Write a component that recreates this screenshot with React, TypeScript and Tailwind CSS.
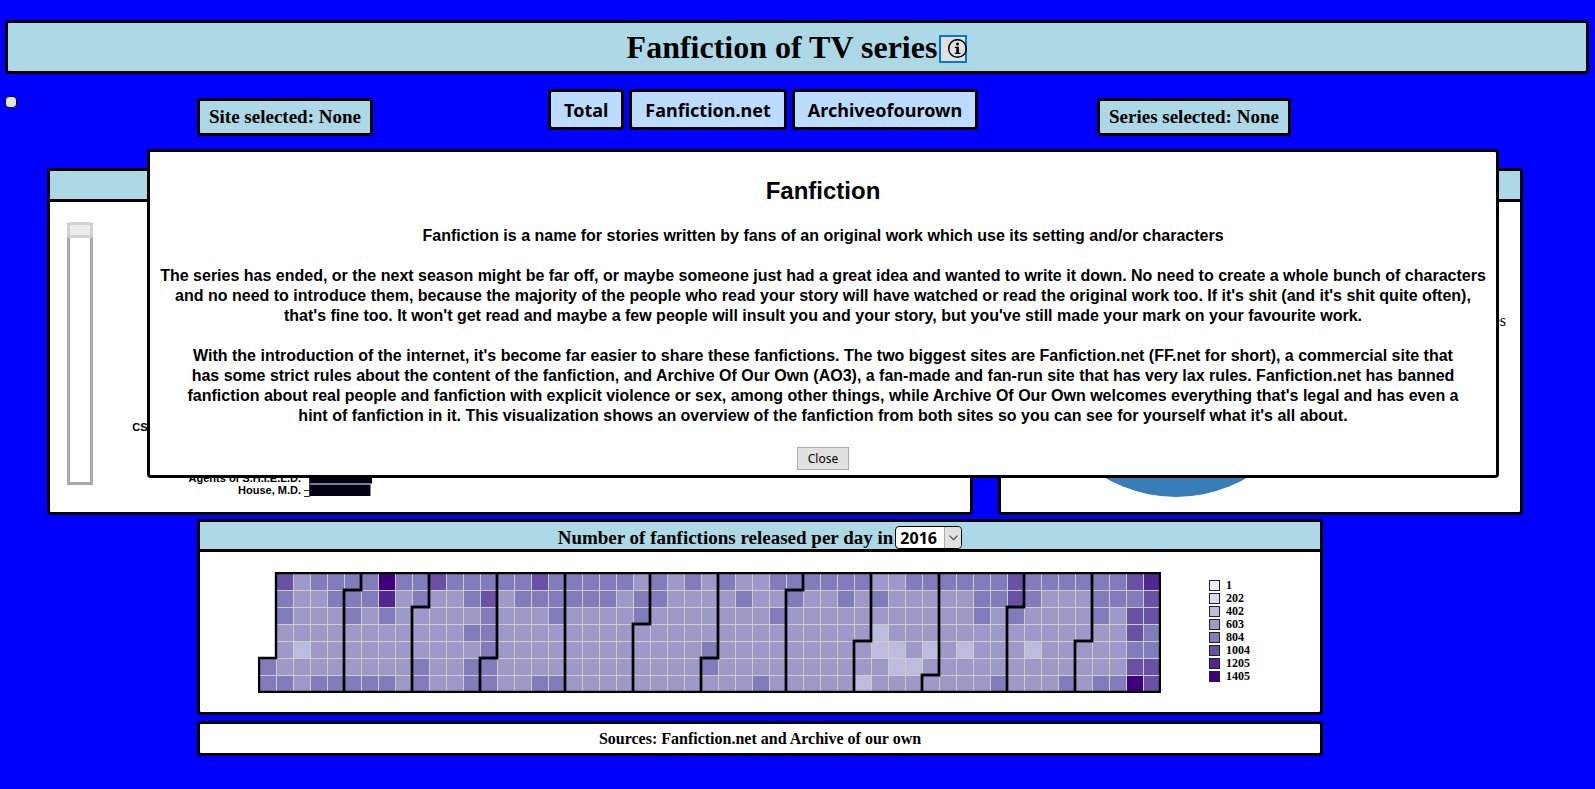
import React, { useState } from 'react'

const CELL = 17
const YEAR = 2016
const PURPLES = ['#efedf5', '#dadaeb', '#bcbddc', '#9e9ac8', '#807dba', '#6a51a3', '#54278f', '#3f007d']
const LEGEND = [1, 202, 402, 603, 804, 1004, 1205, 1405]
const BASE_LEVEL = 3

// Per weekday: weeks whose colour level differs from BASE_LEVEL, keyed by level.
const LEVELS: Record<number, number[]>[] = [
  {
    4: [3, 4, 5, 6, 8, 9, 11, 12, 13, 14, 15, 17, 18, 19, 20, 21, 23, 25, 27, 30, 31, 32, 33, 34, 35, 38, 39, 40, 41, 42, 43, 45, 46, 47, 48, 49, 50],
    5: [1, 10, 16, 44, 51],
    6: [52],
    7: [7],
  },
  {
    4: [1, 4, 5, 6, 9, 12, 15, 16, 17, 18, 19, 20, 22, 23, 28, 31, 34, 36, 42, 43, 45, 49, 50, 51],
    5: [13, 44, 52],
    6: [7],
  },
  { 4: [1, 5, 7, 13, 17, 22, 30, 42, 44, 49], 5: [51, 52] },
  { 2: [36], 4: [12, 13, 52], 5: [51] },
  { 2: [2, 36, 37, 39, 41, 45], 4: [13, 26, 51, 52] },
  { 2: [37, 38], 4: [0, 9, 12, 13, 26], 5: [51, 52] },
  { 2: [35], 4: [0, 1, 3, 4, 5, 6, 7, 9, 12, 13, 16, 17, 29, 43, 47, 49, 50], 5: [52], 7: [51] },
]

const levelOf = (day: number, week: number) => {
  const hit = Object.entries(LEVELS[day]).find(([, weeks]) => weeks.includes(week))
  return hit ? Number(hit[0]) : BASE_LEVEL
}

const position = (date: Date) => {
  const firstDay = new Date(YEAR, 0, 1).getDay()
  const dayOfYear = Math.round((date.getTime() - new Date(YEAR, 0, 1).getTime()) / 86400000)
  return { day: date.getDay(), week: Math.floor((dayOfYear + firstDay) / 7) }
}

const monthPath = (month: number) => {
  const a = position(new Date(YEAR, month, 1))
  const b = position(new Date(YEAR, month + 1, 0))
  return (
    `M${(a.week + 1) * CELL},${a.day * CELL}H${a.week * CELL}V${7 * CELL}` +
    `H${b.week * CELL}V${(b.day + 1) * CELL}H${(b.week + 1) * CELL}V0H${(a.week + 1) * CELL}Z`
  )
}

const FRAME = 'rounded border-[3px] border-black'

function Calendar() {
  const cells: React.ReactElement[] = []
  for (let week = 0; week < 53; week++) {
    for (let day = 0; day < 7; day++) {
      if (week === 0 && day < 5) continue
      cells.push(
        <rect
          key={`${week}-${day}`}
          x={week * CELL}
          y={day * CELL}
          width={CELL}
          height={CELL}
          fill={PURPLES[levelOf(day, week)]}
          stroke="#cccccc"
          shapeRendering="crispEdges"
        />,
      )
    }
  }
  return (
    <svg width="903" height="121" viewBox="-1 -1 903 121" className="shrink-0" role="img" aria-label="Fanfictions per day">
      {cells}
      {Array.from({ length: 12 }, (_, m) => (
        <path key={m} d={monthPath(m)} fill="none" stroke="#000" strokeWidth="2.4" />
      ))}
    </svg>
  )
}

function Info({ onClose }: { onClose: () => void }) {
  return (
    <div
      role="dialog"
      aria-labelledby="info-title"
      className={`${FRAME} absolute top-[149px] right-24 left-[147px] bg-white px-2 pt-[23px] pb-[5px] text-center font-['Liberation_Sans',sans-serif] text-base leading-5 font-bold`}
    >
      <h2 id="info-title" className="mb-[19px] text-2xl leading-8">Fanfiction</h2>
      <p className="mb-5">Fanfiction is a name for stories written by fans of an original work which use its setting and/or characters</p>
      <p className="mb-5">
        The series has ended, or the next season might be far off, or maybe someone just had a great idea and wanted to write it down. No need to create a whole bunch of characters
        <br />
        and no need to introduce them, because the majority of the people who read your story will have watched or read the original work too. If it's shit (and it's shit quite often),
        <br />
        that's fine too. It won't get read and maybe a few people will insult you and your story, but you've still made your mark on your favourite work.
      </p>
      <p className="mb-[21px]">
        With the introduction of the internet, it's become far easier to share these fanfictions. The two biggest sites are Fanfiction.net (FF.net for short), a commercial site that
        <br />
        has some strict rules about the content of the fanfiction, and Archive Of Our Own (AO3), a fan-made and fan-run site that has very lax rules. Fanfiction.net has banned
        <br />
        fanfiction about real people and fanfiction with explicit violence or sex, among other things, while Archive Of Our Own welcomes everything that's legal and has even a
        <br />
        hint of fanfiction in it. This visualization shows an overview of the fanfiction from both sites so you can see for yourself what it's all about.
      </p>
      <button
        type="button"
        onClick={onClose}
        className="mx-auto block h-[23px] border border-[#adadad] bg-[#e1e1e1] px-[10px] font-['Noto_Sans',sans-serif] text-xs font-normal"
      >
        Close
      </button>
    </div>
  )
}

export default function App() {
  const [open, setOpen] = useState(true)
  const siteButton = `${FRAME} h-[41px] bg-[#bbdcff] px-[13px] text-lg`
  const label = `${FRAME} mt-[9px] h-[38px] bg-[#add8e6] px-[9px] text-[19px] leading-8`

  return (
    <div className="relative min-h-screen bg-[#0000ff] pt-5 font-['Liberation_Serif',serif] font-bold text-black">
      <header className={`${FRAME} mr-[6px] ml-[5px] flex h-[54px] items-center justify-center bg-[#add8e6]`}>
        <h1 className="text-[32px] leading-10">Fanfiction of TV series</h1>
        <button
          type="button"
          aria-label="About fanfiction"
          onClick={() => setOpen(true)}
          className="mt-[3px] ml-[2px] flex size-7 items-center justify-end border-2 border-[#0078d7] bg-[#e1e1e1]"
        >
          <svg width="20" height="20" viewBox="0 0 20 20" className="-mr-[2px] shrink-0">
            <circle cx="10.5" cy="9.5" r="8.8" fill="none" stroke="#000" strokeWidth="1.5" />
            <circle cx="10.5" cy="5" r="1.5" />
            <path d="M7.8 7.8h4.1v5.9h1.5v1.2H7.7v-1.2h1.6V9H7.8z" />
          </svg>
        </button>
      </header>

      <div className="mt-[15px] grid h-[79px] grid-cols-[197fr_351fr_549fr_498fr] items-start">
        <div>
          <button type="button" aria-label="Toggle" className="mt-[7px] ml-[5px] block size-3 rounded border border-black bg-[#e1e1e1]" />
        </div>
        <div>
          <p className={`${label} w-fit`}>Site selected: None</p>
        </div>
        <nav className="flex gap-[5px] font-['Noto_Sans',sans-serif]">
          <button type="button" className={siteButton}>Total</button>
          <button type="button" className={siteButton}>Fanfiction.net</button>
          <button type="button" className={siteButton}>Archiveofourown</button>
        </nav>
        <div>
          <p className={`${label} w-fit`}>Series selected: None</p>
        </div>
      </div>

      <main>
        <div className="grid grid-cols-[926fr_525fr] gap-[25px] pr-[72px] pl-[47px]">
          <section className={`${FRAME} h-[347px] min-w-0 bg-white`}>
            <div className="h-[31px] border-b-[3px] border-black bg-[#add8e6]" />
            <svg width="360" height="310" viewBox="50 202 360 310" className="block font-['Liberation_Sans',sans-serif] text-[11px]">
              <rect x="68.5" y="224.5" width="23" height="259" fill="#fff" stroke="#a9a9a9" strokeWidth="3" />
              <rect x="68.5" y="223.5" width="23" height="13" rx="2" fill="#ececec" stroke="#d3d3d3" strokeWidth="3" />
              <text x="301" y="431" textAnchor="end">CSI: Crime Scene Investigations</text>
              <text x="301" y="482" textAnchor="end">Agents of S.H.I.E.L.D.</text>
              <text x="301" y="494" textAnchor="end">House, M.D.</text>
              <path d="M310 440h62v43.5h-62zM310 484.5h60.5v11.5h-60.5z" fill="#000014" />
              <path d="M304 490.5h6M304 496.5h5.5V440" fill="none" stroke="#333" />
            </svg>
          </section>
          <section className={`${FRAME} h-[347px] min-w-0 bg-white`}>
            <div className="h-[31px] border-b-[3px] border-black bg-[#add8e6]" />
            <div className="flex items-start justify-between pr-[14px] pl-[35px]">
              <svg width="280" height="280" viewBox="0 0 280 280" className="mt-[15px] shrink-0">
                <circle cx="140" cy="140" r="140" fill="#377eb8" />
              </svg>
              <p className="mt-[107px] font-normal">Series</p>
            </div>
          </section>
        </div>

        <section className={`${FRAME} mt-[4px] mr-[272px] ml-[197px] h-[196px] bg-white`}>
          <div className="flex h-[30px] items-end justify-center gap-[2px] border-b-[3px] border-black bg-[#add8e6]">
            <label htmlFor="year" className="text-[19px] leading-[22px]">Number of fanfictions released per day in</label>
            <span className="relative">
              <select
                id="year"
                defaultValue="2016"
                className="block h-[23px] w-[67px] appearance-none rounded border border-black bg-white pl-1 font-['Noto_Sans',sans-serif] text-base leading-5"
              >
                <option>2016</option>
              </select>
              <span className="pointer-events-none absolute top-px right-px flex h-[21px] w-[17px] items-center justify-center rounded-r-sm border-l border-[#adadad] bg-[#e1e1e1]">
                <svg width="9" height="6" viewBox="0 0 9 6">
                  <path d="M.5.7l4 4 4-4" fill="none" stroke="#444" strokeWidth="1.1" />
                </svg>
              </span>
            </span>
          </div>
          <div className="flex pt-5 pl-[58px]">
            <Calendar />
            <ul className="mt-[7px] ml-12 text-[12px] leading-[13px]">
              {LEGEND.map((value, i) => (
                <li key={value} className="flex h-[13px] items-center gap-[6px]">
                  <svg width="11" height="11" viewBox="0 0 11 11">
                    <rect x=".5" y=".5" width="10" height="10" fill={PURPLES[i]} stroke="#222" />
                  </svg>
                  {value}
                </li>
              ))}
            </ul>
          </div>
        </section>
      </main>

      <footer className={`${FRAME} mt-[6px] mr-[272px] ml-[197px] h-[35px] bg-white text-center text-base leading-[30px]`}>
        Sources: Fanfiction.net and Archive of our own
      </footer>

      {open && <Info onClose={() => setOpen(false)} />}
    </div>
  )
}
